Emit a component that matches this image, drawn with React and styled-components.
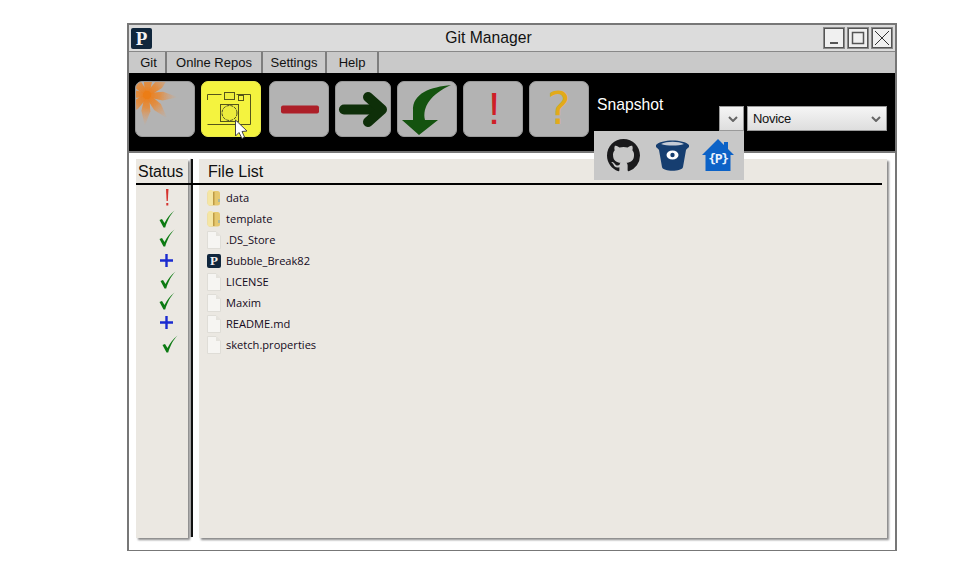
import React from 'react'
import styled, { createGlobalStyle } from 'styled-components'

const GlobalStyle = createGlobalStyle`
  html, body {
    margin: 0;
    background: #fff;
  }
`

const files = [
  { name: 'data', kind: 'folder', status: 'error' },
  { name: 'template', kind: 'folder', status: 'ok' },
  { name: '.DS_Store', kind: 'file', status: 'ok', lift: 3 },
  { name: 'Bubble_Break82', kind: 'app', status: 'add' },
  { name: 'LICENSE', kind: 'file', status: 'ok', shift: 1, lift: 3 },
  { name: 'Maxim', kind: 'file', status: 'ok', lift: 4 },
  { name: 'README.md', kind: 'file', status: 'add', lift: 2 },
  { name: 'sketch.properties', kind: 'file', status: 'ok', shift: 6, lift: 2 },
]

function ClearIcon() {
  const angles = [0, 45, 90, 135, 180, 225, 270, 315]
  return (
    <svg width="60" height="56" viewBox="0 0 60 56">
      <defs>
        <radialGradient id="burst" gradientUnits="userSpaceOnUse" cx="12" cy="14" r="31">
          <stop offset="0" stopColor="#ec7d18" />
          <stop offset="0.4" stopColor="#e58a38" stopOpacity="0.9" />
          <stop offset="1" stopColor="#e0a070" stopOpacity="0" />
        </radialGradient>
        <filter id="soft">
          <feGaussianBlur stdDeviation="0.5" />
        </filter>
      </defs>
      <g filter="url(#soft)">
        {angles.map((a) => (
          <path key={a} d="M12 12 L28 9.5 L43 14 L28 18.5 L12 16 Z" fill="url(#burst)" transform={`rotate(${a + 4} 12 14)`} />
        ))}
        <circle cx="12" cy="14" r="4" fill="#ec7d18" />
      </g>
    </svg>
  )
}

function CameraIcon() {
  return (
    <svg width="60" height="60" viewBox="0 0 60 60" fill="none" stroke="#55551a" strokeWidth="1">
      <path d="M6.5 19 V13.5 H49.5 V43.5 H6.5" />
      <rect x="20.5" y="9.5" width="15" height="11" fill="#f4f33f" stroke="none" />
      <rect x="23.5" y="11.5" width="10" height="7" fill="#eded3d" />
      <rect x="37.5" y="14.5" width="5" height="5" fill="#f4f33f" />
      <rect x="19.5" y="23.5" width="18" height="17" fill="#eded3d" />
      <circle cx="28.5" cy="32" r="7.5" strokeDasharray="3 1" stroke="#222" strokeWidth="0.8" />
      <path
        d="M34.5 39 V55 L38 51.5 L41 57.5 L43.5 56 L41 50.5 L46 50 Z"
        fill="#fff"
        stroke="#444"
        strokeLinejoin="round"
      />
    </svg>
  )
}

function MinusIcon() {
  return (
    <svg width="60" height="56" viewBox="0 0 60 56">
      <rect x="12" y="24.5" width="38" height="8" rx="2" fill="#ad1f28" />
    </svg>
  )
}

function ArrowIcon() {
  return (
    <svg width="56" height="56" viewBox="0 0 56 56" fill="none" stroke="#0e2f09" strokeWidth="10" strokeLinecap="round" strokeLinejoin="round">
      <path d="M9 28.5 H44" />
      <path d="M33 16 L47 28.5 L33 41" />
    </svg>
  )
}

function PullIcon() {
  return (
    <svg width="60" height="58" viewBox="0 0 60 58">
      <path
        d="M54 4 C34 6 15 12 16 30 L16 39 L5 39 L22 54 L41 39 L28 39 C25 26 34 13 54 4 Z"
        fill="#14530f"
      />
    </svg>
  )
}

function GithubIcon() {
  return (
    <svg width="33" height="33" viewBox="0 0 16 16" fill="#1a1a1c">
      <path d="M8 0C3.58 0 0 3.58 0 8c0 3.54 2.29 6.53 5.47 7.59.4.07.55-.17.55-.38 0-.19-.01-.82-.01-1.49-2.01.37-2.53-.49-2.69-.94-.09-.23-.48-.94-.82-1.13-.28-.15-.68-.52-.01-.53.63-.01 1.08.58 1.23.82.72 1.21 1.87.87 2.33.66.07-.52.28-.87.51-1.07-1.78-.2-3.64-.89-3.64-3.95 0-.87.31-1.59.82-2.15-.08-.2-.36-1.02.08-2.12 0 0 .67-.21 2.2.82.64-.18 1.32-.27 2-.27s1.36.09 2 .27c1.53-1.04 2.2-.82 2.2-.82.44 1.1.16 1.92.08 2.12.51.56.82 1.27.82 2.15 0 3.07-1.87 3.75-3.65 3.95.29.25.54.73.54 1.48 0 1.07-.01 1.93-.01 2.2 0 .21.15.46.55.38A8.01 8.01 0 0 0 16 8c0-4.42-3.58-8-8-8z" />
    </svg>
  )
}

function BucketIcon() {
  return (
    <svg width="33" height="33" viewBox="0 0 33 33">
      <path d="M0 6 C5 0 28 0 33 6 L33 8 C32 9 30.5 10 30 11 L27 28 C26 33 7 33 6 28 L3 11 C2.5 10 1 9 0 8 Z" fill="#163e70" />
      <path d="M5 5 C11 2 22 2 28 5 C22 7 11 7 5 5 Z" fill="#c6ccd6" />
      <ellipse cx="16.5" cy="16" rx="6" ry="4.5" fill="#fff" />
      <circle cx="16.5" cy="16" r="2.2" fill="#163e70" />
    </svg>
  )
}

function HomeIcon() {
  return (
    <svg width="33" height="33" viewBox="0 0 33 33">
      <path d="M16 0 L22 6 V3 H26 V10 L32 16 H28.5 V32 H3.5 V16 H0 Z" fill="#0c62c7" />
    </svg>
  )
}

const Page = styled.div`
  padding: 23px 0 0 127px;
  font-family: 'Liberation Sans', Arial, sans-serif;
`

const Win = styled.div`
  position: relative;
  box-sizing: border-box;
  width: 770px;
  height: 528px;
  border: 2px solid #777;
  border-bottom-width: 1px;
  background: #fff;
  display: flex;
  flex-direction: column;
`

const TitleBar = styled.div`
  height: 26px;
  background: #dcdcdc;
  display: flex;
  align-items: center;
  justify-content: space-between;
  padding: 0 3px 0 2px;
  position: relative;
`

const AppLogo = styled.span`
  width: ${(p) => p.size}px;
  height: ${(p) => p.size}px;
  flex: none;
  background: #10263c;
  border-radius: 2px;
  color: #f2f2f2;
  font-family: 'Liberation Serif', serif;
  font-weight: bold;
  font-size: ${(p) => Math.round(p.size * 0.92)}px;
  line-height: ${(p) => p.size}px;
  text-align: center;
`

const Title = styled.div`
  position: absolute;
  left: 0;
  right: 47px;
  text-align: center;
  font-size: 15.7px;
  color: #111;
`

const WinButtons = styled.div`
  display: flex;
  gap: 4px;
`

const WinButton = styled.span`
  box-sizing: border-box;
  width: 20px;
  height: 20px;
  border: 1px solid #555;
  outline: 1px solid #8a8a8a;
  display: block;
  background: #f0f0f0;
  svg {
    display: block;
  }
`

const MenuBar = styled.div`
  height: 22px;
  background: #c9c9c9;
  border-top: 1px solid #888;
  display: flex;
  padding-left: 3px;
  box-sizing: border-box;
  flex: none;
`

const MenuItem = styled.div`
  box-sizing: border-box;
  width: ${(p) => p.width}px;
  border-right: 2px solid #7d7d7d;
  text-align: center;
  font-size: 13px;
  line-height: 21px;
  color: #111;
`

const Toolbar = styled.div`
  position: relative;
  height: 80px;
  background: #000;
  border-bottom: 2px solid #777;
  display: flex;
  padding: 8px 0 0 6px;
  box-sizing: border-box;
  flex: none;
`

const ToolButton = styled.div`
  box-sizing: border-box;
  width: ${(p) => p.width || 60}px;
  height: 56px;
  margin-left: ${(p) => p.gap ?? 6}px;
  background: ${(p) => (p.active ? '#f4f33f' : '#b3b3b3')};
  border: 1px solid ${(p) => (p.active ? '#e8e84a' : '#999')};
  border-radius: 7px;
  position: relative;
  overflow: ${(p) => (p.active ? 'visible' : 'hidden')};
  display: flex;
  align-items: center;
  justify-content: center;
  svg {
    position: absolute;
    left: -1px;
    top: -1px;
  }
`

const Glyph = styled.span`
  color: ${(p) => p.color};
  font-family: ${(p) => p.family};
  font-size: ${(p) => p.size}px;
  margin-left: ${(p) => p.nudge || 0}px;
  line-height: 1;
`

const Snapshot = styled.div`
  margin: 15px 0 0 8px;
  color: #fff;
  font-size: 15.7px;
  width: 122px;
  flex: none;
`

const SelectBox = styled.div`
  box-sizing: border-box;
  width: ${(p) => p.width}px;
  height: 25px;
  margin: 25px 0 0 ${(p) => p.gap}px;
  background: linear-gradient(#f5f5f5, #dedede);
  border: 1px solid #9a9a9a;
  display: flex;
  align-items: center;
  justify-content: space-between;
  padding: 0 5px;
  font-size: 13px;
  letter-spacing: -0.3px;
  color: #111;
  flex: none;
  svg {
    margin-left: auto;
  }
`

const RepoPopup = styled.div`
  position: absolute;
  left: 465px;
  top: 58px;
  width: 150px;
  height: 49px;
  background: #c8c8c8;
  display: flex;
  align-items: center;
  padding-left: 13px;
  box-sizing: border-box;
  z-index: 2;
`

const RepoIcon = styled.span`
  position: relative;
  width: 33px;
  height: 33px;
  display: block;
  margin-left: ${(p) => p.gap || 0}px;
  svg {
    display: block;
  }
`

const HomeText = styled.span`
  position: absolute;
  left: 3px;
  right: 4px;
  top: 13px;
  text-align: center;
  color: #eaf2ff;
  font-size: 13px;
  font-weight: bold;
  font-family: 'DejaVu Sans Mono', monospace;
  letter-spacing: -1.4px;
  line-height: 14px;
`

const Body = styled.div`
  position: relative;
  flex: 1;
  display: flex;
  padding: 6px 0 0 7px;
  min-height: 0;
`

const HeaderRule = styled.div`
  position: absolute;
  left: 7px;
  top: 30px;
  width: 746px;
  height: 2px;
  background: #000;
`

const Panel = styled.div`
  box-sizing: border-box;
  height: 379px;
  background: #ebe8e2;
  box-shadow: 2px 2px 2px #8a8a8a;
`

const StatusPanel = styled(Panel)`
  width: 52px;
  flex: none;
`

const Divider = styled.div`
  width: 2px;
  height: 378px;
  background: #111;
  margin: 0 6px 0 3px;
  box-shadow: -1px 0 1px #999;
  flex: none;
`

const FilePanel = styled(Panel)`
  width: 688px;
  flex: none;
`

const HeaderCell = styled.div`
  height: 24px;
  margin-bottom: 2px;
  font-size: 16px;
  line-height: 25px;
  color: #111;
  padding-left: ${(p) => p.indent}px;
`

const Rows = styled.div`
  padding-top: 2px;
`

const StatusRow = styled.div`
  height: 21px;
  display: flex;
  align-items: center;
  justify-content: center;
  padding-left: 10px;
`

const FileRow = styled.div`
  height: 21px;
  display: flex;
  align-items: center;
  font-family: 'Open Sans', 'Noto Sans', sans-serif;
  font-size: 11.1px;
  color: #140a1c;
  gap: 5px;
  padding-left: 8px;
`

const StatusMark = styled.span`
  display: block;
  margin-left: ${(p) => p.shift || 0}px;
  margin-top: ${(p) => -(p.lift || 0)}px;
  svg {
    display: block;
  }
`

function StatusGlyph({ status, shift, lift }) {
  if (status === 'error') {
    return (
      <StatusMark>
        <svg width="6" height="18" viewBox="0 0 6 18">
          <path d="M2 0 H4.5 L3.8 12 H2.6 Z" fill="#d5332e" />
          <rect x="2.3" y="14" width="2" height="2.5" fill="#d5332e" />
        </svg>
      </StatusMark>
    )
  }
  if (status === 'add') {
    return (
      <StatusMark shift={-2} lift={lift}>
        <svg width="13" height="13" viewBox="0 0 13 13">
          <path d="M0 5.3 H13 V7.7 H0 Z M5.3 0 H7.7 V13 H5.3 Z" fill="#1b2bd0" />
        </svg>
      </StatusMark>
    )
  }
  return (
    <StatusMark shift={shift} lift={lift}>
      <svg width="16" height="18" viewBox="0 0 16 18">
        <path d="M0.5 10 L3 9 L5.5 13 C8 8 11 4 15.5 0.5 C11 5.5 8.5 10 6.2 17.5 L4.5 17.5 Z" fill="#0c7a12" />
      </svg>
    </StatusMark>
  )
}

function FileIcon({ kind }) {
  if (kind === 'app') return <AppLogo size={14}>P</AppLogo>
  if (kind === 'folder') {
    return (
      <svg width="14" height="17" viewBox="0 0 14 17">
        <rect x="0.5" y="2" width="12.5" height="14.5" rx="2.5" fill="#e6c86e" />
        <rect x="0.5" y="1" width="6" height="15.5" rx="2.5" fill="#f5e6a4" />
        <rect x="6" y="3" width="1.5" height="13" fill="#bd9a45" />
        <rect x="11.5" y="10" width="1" height="3" fill="#6fa6c8" />
      </svg>
    )
  }
  return (
    <svg width="14" height="18" viewBox="0 0 14 18">
      <path d="M0.5 0.5 H9 L13.5 5 V17.5 H0.5 Z" fill="#f6f5f2" stroke="#dfddd7" />
      <path d="M9 0.5 V5 H13.5 Z" fill="#e4e2dc" />
    </svg>
  )
}

export default function App() {
  return (
    <Page>
      <GlobalStyle />
      <Win>
        <TitleBar>
          <AppLogo size={21}>P</AppLogo>
          <Title>Git Manager</Title>
          <WinButtons>
            <WinButton>
              <svg width="18" height="18" viewBox="0 0 18 18" stroke="#555" strokeWidth="2">
                <path d="M5 14 H13" />
              </svg>
            </WinButton>
            <WinButton>
              <svg width="18" height="18" viewBox="0 0 18 18" fill="none" stroke="#555" strokeWidth="1.5">
                <rect x="3.5" y="3.5" width="11" height="11" />
              </svg>
            </WinButton>
            <WinButton>
              <svg width="18" height="18" viewBox="0 0 18 18" stroke="#333" strokeWidth="1">
                <path d="M2 2 L16 16 M16 2 L2 16" />
              </svg>
            </WinButton>
          </WinButtons>
        </TitleBar>
        <MenuBar>
          <MenuItem width={35}>Git</MenuItem>
          <MenuItem width={96}>Onlne Repos</MenuItem>
          <MenuItem width={64}>Settings</MenuItem>
          <MenuItem width={52}>Help</MenuItem>
        </MenuBar>
        <Toolbar>
          <ToolButton gap={0}>
            <ClearIcon />
          </ToolButton>
          <ToolButton active>
            <CameraIcon />
          </ToolButton>
          <ToolButton gap={8}>
            <MinusIcon />
          </ToolButton>
          <ToolButton width={56}>
            <ArrowIcon />
          </ToolButton>
          <ToolButton>
            <PullIcon />
          </ToolButton>
          <ToolButton>
            <Glyph color="#cf1f26" family="'Liberation Sans', sans-serif" size={44} nudge={2}>!</Glyph>
          </ToolButton>
          <ToolButton>
            <Glyph color="#e2aa1a" family="'DejaVu Sans', sans-serif" size={44}>?</Glyph>
          </ToolButton>
          <Snapshot>Snapshot</Snapshot>
          <SelectBox width={25} gap={0}>
            <svg width="10" height="6" viewBox="0 0 10 6" fill="none" stroke="#666" strokeWidth="2">
              <path d="M1 1 L5 5 L9 1" />
            </svg>
          </SelectBox>
          <SelectBox width={140} gap={3}>
            Novice
            <svg width="10" height="6" viewBox="0 0 10 6" fill="none" stroke="#666" strokeWidth="2">
              <path d="M1 1 L5 5 L9 1" />
            </svg>
          </SelectBox>
          <RepoPopup>
            <RepoIcon>
              <GithubIcon />
            </RepoIcon>
            <RepoIcon gap={16}>
              <BucketIcon />
            </RepoIcon>
            <RepoIcon gap={13}>
              <HomeIcon />
              <HomeText>{'{P}'}</HomeText>
            </RepoIcon>
          </RepoPopup>
        </Toolbar>
        <Body>
          <HeaderRule />
          <StatusPanel>
            <HeaderCell indent={2}>Status</HeaderCell>
            <Rows>
              {files.map((f) => (
                <StatusRow key={f.name}>
                  <StatusGlyph status={f.status} shift={f.shift} lift={f.lift} />
                </StatusRow>
              ))}
            </Rows>
          </StatusPanel>
          <Divider />
          <FilePanel>
            <HeaderCell indent={9}>File List</HeaderCell>
            <Rows>
              {files.map((f) => (
                <FileRow key={f.name}>
                  <FileIcon kind={f.kind} />
                  {f.name}
                </FileRow>
              ))}
            </Rows>
          </FilePanel>
        </Body>
      </Win>
    </Page>
  )
}
